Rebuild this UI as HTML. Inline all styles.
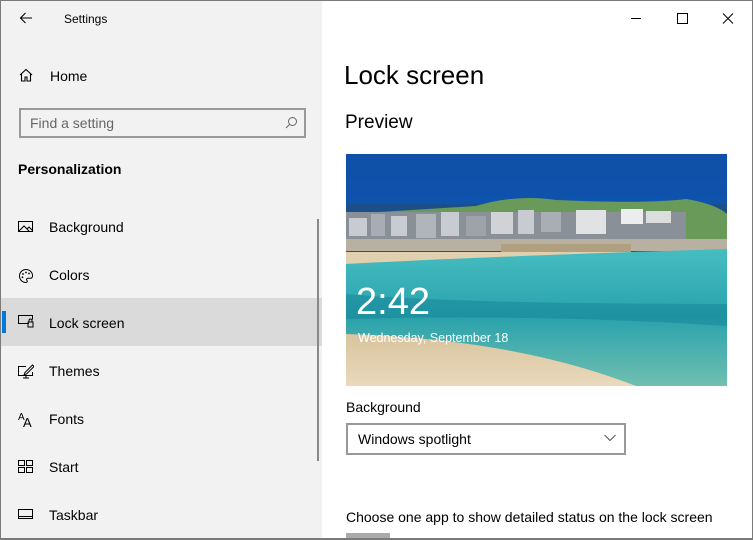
<!DOCTYPE html>
<html><head><meta charset="utf-8"><style>
*{margin:0;padding:0;box-sizing:border-box}
body{width:753px;height:540px;overflow:hidden;background:#fff;font-family:"Liberation Sans",sans-serif;color:#000;position:relative}
.win{position:absolute;left:0;top:0;width:753px;height:540px;border:1px solid #7a7a7a;border-bottom:2px solid #7a7a7a}
.side{position:absolute;left:1px;top:1px;width:321px;height:537px;background:#f2f2f2}
.t{position:absolute;white-space:nowrap}
.item{position:absolute;left:0;width:321px;height:48px;font-size:14px}
.item span{position:absolute;left:48px;top:15px}
.item svg{position:absolute;left:17px;top:16px}
.sel{background:#dadada}
.sel:before{content:"";position:absolute;left:1px;top:13px;width:4px;height:22px;background:#0078d7}
</style></head><body>
<div class="side">
 <svg class="t" style="left:18px;top:11px" width="14" height="12" viewBox="0 0 14 12"><path d="M13 6H1.5M6.5 1L1.5 6l5 5" stroke="#000" fill="none" stroke-width="1.1"/></svg>
 <div class="t" style="left:63px;top:11px;font-size:12px">Settings</div>
 <svg class="t" style="left:18px;top:67px" width="14" height="14" viewBox="0 0 14 14"><path d="M1 7L7 1.5 13 7M2.5 5.8V13h3.5V9h2v4h3.5V5.8" stroke="#000" fill="none" stroke-width="1.1"/></svg>
 <div class="t" style="left:49px;top:67px;font-size:14px">Home</div>
 <div class="t" style="left:18px;top:107px;width:287px;height:30px;border:2px solid #999;background:#f2f2f2"></div>
 <div class="t" style="left:29px;top:114px;font-size:14px;color:#666">Find a setting</div>
 <svg class="t" style="left:284px;top:115px" width="13" height="13" viewBox="0 0 13 13"><circle cx="7.5" cy="5.5" r="4" stroke="#666" fill="none"/><path d="M4.5 8.5L1 12" stroke="#666"/></svg>
 <div class="t" style="left:17px;top:160px;font-size:14px;font-weight:bold">Personalization</div>
 <div class="item" style="top:203px"><svg width="16" height="14" viewBox="0 0 16 14"><rect x="0.5" y="1.5" width="14" height="10" fill="none" stroke="#000"/><path d="M1 11L6 6l5 5M9 9l2-2 4 4" stroke="#000" fill="none"/></svg><span>Background</span></div>
 <div class="item" style="top:251px"><svg width="16" height="16" viewBox="0 0 16 16"><path d="M8 1.5a6.5 6.5 0 1 0 0 13c1.5 0 1.5-1.5.8-2.300-.7-.8 0-2 1.2-2h2.5c1.5 0 2-1 2-2.5 0-3.5-3-6.2-6.5-6.2z" fill="none" stroke="#000"/><circle cx="5" cy="6" r=".9"/><circle cx="8" cy="4.5" r=".9"/><circle cx="4.5" cy="9.3" r=".9"/><circle cx="11" cy="5.5" r=".9"/></svg><span>Colors</span></div>
 <div class="item sel" style="top:297px;height:48px"><svg width="16" height="14" viewBox="0 0 16 14"><path d="M11 9.5H.5v-8h14v4" fill="none" stroke="#000"/><rect x="10" y="8" width="5" height="5" fill="none" stroke="#000"/><path d="M11 8V6.5a1.5 1.5 0 0 1 3 0V8" fill="none" stroke="#000"/></svg><span style="top:17px">Lock screen</span></div>
 <div class="item" style="top:347px"><svg width="16" height="16" viewBox="0 0 16 16"><path d="M8 2.5H.5v9h14V8M5 14h6M8 11.5V14" fill="none" stroke="#000"/><path d="M14.5 1L7 8.5l-1 2.5 2.5-1L16 2.5z" fill="none" stroke="#000"/></svg><span>Themes</span></div>
 <div class="item" style="top:395px"><span style="left:17px;top:16px;font-size:10px">A</span><span style="left:22px;top:19px;font-size:13px">A</span><span>Fonts</span></div>
 <div class="item" style="top:443px"><svg width="16" height="14" viewBox="0 0 16 14"><rect x=".5" y=".5" width="6" height="5" fill="none" stroke="#000"/><rect x="8.5" y=".5" width="6" height="5" fill="none" stroke="#000"/><rect x=".5" y="7.5" width="6" height="5" fill="none" stroke="#000"/><rect x="8.5" y="7.5" width="6" height="5" fill="none" stroke="#000"/></svg><span>Start</span></div>
 <div class="item" style="top:491px"><svg width="16" height="14" viewBox="0 0 16 14"><rect x=".5" y="1.5" width="14" height="9" fill="none" stroke="#000"/><path d="M1 8.5h14" stroke="#000"/></svg><span>Taskbar</span></div>
 <div class="t" style="left:316px;top:218px;width:2px;height:242px;background:#888"></div>
</div>
<svg class="t" style="left:628px;top:12px" width="110" height="14" viewBox="0 0 110 14"><path d="M3 6.5h10" stroke="#000"/><rect x="49.5" y="1.5" width="10" height="10" fill="none" stroke="#000"/><path d="M95 1.5l10 10M105 1.5l-10 10" stroke="#000"/></svg>
<div class="t" style="left:344px;top:60px;font-size:26px">Lock screen</div>
<div class="t" style="left:345px;top:112px;font-size:19px">Preview</div>
<svg class="t" style="left:346px;top:154px" width="381" height="232" viewBox="0 0 381 232">
 <defs>
  <linearGradient id="sky" x1="0" y1="0" x2="0" y2="1"><stop offset="0" stop-color="#0f4fa8"/><stop offset="1" stop-color="#0d62bf"/></linearGradient>
  <linearGradient id="sea" x1="0" y1="0" x2="0" y2="1"><stop offset="0" stop-color="#45bdc0"/><stop offset=".5" stop-color="#2aa2ac"/><stop offset="1" stop-color="#70bfb0"/></linearGradient>
  <linearGradient id="sand" x1="0" y1="0" x2="0" y2="1"><stop offset="0" stop-color="#d8c49d"/><stop offset="1" stop-color="#ead9bc"/></linearGradient>
 </defs>
 <rect width="381" height="232" fill="url(#sky)"/>
 <rect y="50" width="381" height="12" fill="#1a4f8a"/>
 <path d="M130 52Q170 40 210 46Q300 50 340 45Q370 50 381 60V85H0V60z" fill="#6a9a5a"/>
 <rect x="0" y="58" width="340" height="30" fill="#8a9098"/>
 <g fill="#c8ccd2"><rect x="3" y="64" width="18" height="18"/><rect x="25" y="60" width="14" height="22" fill="#a8adb5"/><rect x="45" y="62" width="16" height="20"/><rect x="70" y="60" width="20" height="24" fill="#b0b5bc"/><rect x="95" y="58" width="18" height="24"/><rect x="120" y="62" width="20" height="20" fill="#9ea3aa"/><rect x="145" y="58" width="22" height="22" fill="#d0d2d5"/><rect x="172" y="56" width="16" height="24"/><rect x="195" y="58" width="20" height="20" fill="#a9aeb5"/><rect x="230" y="56" width="30" height="24" fill="#e0e2e4"/><rect x="275" y="55" width="22" height="15" fill="#eceeee"/><rect x="300" y="57" width="25" height="12" fill="#dcdede"/></g>
 <rect y="85" width="381" height="12" fill="#b8b0a0"/>
 <path d="M155 90h130v8H180v12h-25z" fill="#b0a080"/>
 <path d="M0 98H330l50-2v20H0z" fill="#e0d0b0"/>
 <path d="M0 110Q150 102 381 95V232H0z" fill="url(#sea)"/>
 <path d="M0 140Q120 150 381 150V172Q200 160 0 165z" fill="#117f95" opacity=".45"/>
 <path d="M0 180Q170 185 290 232H0z" fill="url(#sand)"/>
 <text x="10" y="160" font-family="Liberation Sans,sans-serif" font-size="38" fill="#fff">2:42</text>
 <text x="12" y="188" font-family="Liberation Sans,sans-serif" font-size="12.5" fill="#fff">Wednesday, September 18</text>
</svg>
<div class="t" style="left:346px;top:399px;font-size:14px">Background</div>
<div class="t" style="left:346px;top:423px;width:280px;height:32px;border:2px solid #999"></div>
<div class="t" style="left:358px;top:431px;font-size:14px">Windows spotlight</div>
<svg class="t" style="left:604px;top:434px" width="12" height="8" viewBox="0 0 12 8"><path d="M.5 1l5.5 5.5L11.5 1" fill="none" stroke="#555"/></svg>
<div class="t" style="left:346px;top:509px;font-size:14px">Choose one app to show detailed status on the lock screen</div>
<div class="t" style="left:346px;top:533px;width:44px;height:6px;background:#aaa"></div>
<div class="win"></div>
</body></html>
